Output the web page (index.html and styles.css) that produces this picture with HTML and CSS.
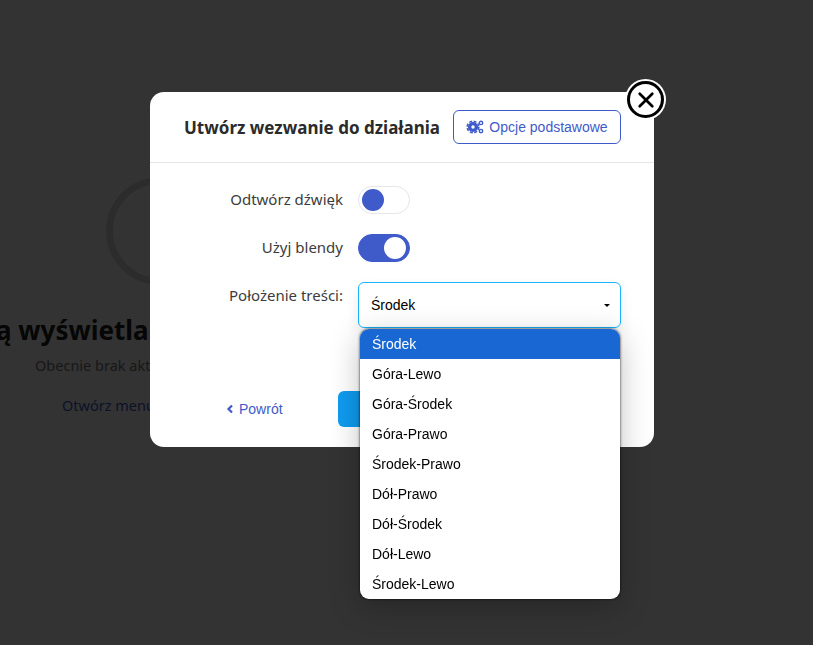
FILE: index.html
```html
<!DOCTYPE html>
<html lang="pl">
<head>
<meta charset="utf-8">
<title>Utwórz wezwanie do działania</title>
<link rel="stylesheet" href="styles.css">
</head>
<body>
<main class="empty">
  <div class="ring"></div>
  <h2 class="empty-title">ą wyświetlać</h2>
  <p class="empty-text">Obecnie brak aktywnych</p>
  <a class="empty-link">Otwórz menu</a>
</main>
<div class="overlay"></div>
<section class="modal">
  <button class="close" aria-label="Zamknij">
    <svg viewBox="0 0 20 20" width="18" height="18"><path d="M3 3L17 17M17 3L3 17" fill="none" stroke="#000" stroke-width="3" stroke-linecap="round"/></svg>
  </button>
  <header class="modal-header">
    <h1 class="modal-title">Utwórz wezwanie do działania</h1>
    <button class="outline-btn">
      <svg class="gears" viewBox="0 0 18 14" width="18" height="14">
        <circle cx="7" cy="7" r="3.4" fill="none" stroke="#3f5bc9" stroke-width="3.4"/>
        <circle cx="7" cy="7" r="5.8" fill="none" stroke="#3f5bc9" stroke-width="1.6" stroke-dasharray="3 1.55"/>
        <circle cx="15" cy="2.9" r="1.7" fill="none" stroke="#3f5bc9" stroke-width="1.4"/>
        <circle cx="15" cy="11.1" r="1.7" fill="none" stroke="#3f5bc9" stroke-width="1.4"/>
      </svg>
      Opcje podstawowe
    </button>
  </header>
  <div class="modal-body">
    <div class="form">
      <span class="label">Odtwórz dźwięk</span>
      <span class="switch"><span class="knob"></span></span>
      <span class="label">Użyj blendy</span>
      <span class="switch on"><span class="knob"></span></span>
      <span class="label label-top">Położenie treści:</span>
      <div class="select-wrap">
        <div class="select">Środek<span class="caret"></span></div>
        <ul class="menu">
          <li class="active">Środek</li>
          <li>Góra-Lewo</li>
          <li>Góra-Środek</li>
          <li>Góra-Prawo</li>
          <li>Środek-Prawo</li>
          <li>Dół-Prawo</li>
          <li>Dół-Środek</li>
          <li>Dół-Lewo</li>
          <li>Środek-Lewo</li>
        </ul>
      </div>
    </div>
    <footer class="modal-footer">
      <a class="back">
        <svg viewBox="0 0 8 10" width="8" height="10"><path d="M6 1.5L2.5 5L6 8.5" fill="none" stroke="#3f5bc9" stroke-width="2.2"/></svg>
        Powrót
      </a>
      <button class="primary"></button>
    </footer>
  </div>
</section>
</body>
</html>
```
FILE: styles.css
```css
* { box-sizing: border-box; }
html, body { height: 100%; }
body {
  margin: 0;
  overflow: hidden;
  background: #fff;
  font-family: "Noto Sans", sans-serif;
}
.empty {
  width: 320px;
  padding-top: 177px;
  display: flex;
  flex-direction: column;
  align-items: flex-start;
  color: #222;
}
.ring {
  width: 108px;
  height: 108px;
  margin-left: 106px;
  border: 7px solid #ddd;
  border-radius: 50%;
}
.empty-title {
  margin: 27px 0 0 -4px;
  font-size: 26px;
  line-height: 36px;
  font-weight: 700;
  white-space: nowrap;
}
.empty-text {
  margin: 6px 0 0 35px;
  font-size: 14.5px;
  line-height: 22px;
  color: #777;
  white-space: nowrap;
}
.empty-link {
  margin: 18px 0 0 62px;
  font-size: 14.5px;
  line-height: 22px;
  color: #3f5bc9;
  white-space: nowrap;
}
.overlay {
  position: fixed;
  inset: 0;
  background: rgba(0, 0, 0, 0.8);
}
.modal {
  position: absolute;
  left: 150px;
  top: 92px;
  width: 504px;
  height: 355px;
  background: #fff;
  border-radius: 14px;
}
.close {
  position: absolute;
  right: -10px;
  top: -11px;
  width: 37px;
  height: 37px;
  padding: 0;
  display: flex;
  align-items: center;
  justify-content: center;
  background: #fff;
  border: 3px solid #000;
  border-radius: 50%;
  box-shadow: 0 0 0 2px #fff;
}
.modal-header {
  height: 71px;
  padding: 0 33px 1px 34px;
  display: flex;
  align-items: center;
  justify-content: space-between;
  border-bottom: 1px solid #e5e5e5;
}
.modal-title {
  margin: 1px 0 0 0;
  font-size: 17px;
  font-weight: 700;
  color: #2b2b2b;
  white-space: nowrap;
}
.outline-btn {
  width: 168px;
  height: 34px;
  padding: 0;
  display: flex;
  align-items: center;
  justify-content: center;
  gap: 5px;
  background: #fff;
  border: 1px solid #3f5bc9;
  border-radius: 6px;
  color: #3f5bc9;
  font-family: "Liberation Sans", sans-serif;
  font-size: 14px;
}
.modal-body {
  padding: 23px 33px 0 0;
}
.form {
  display: grid;
  grid-template-columns: 193px 263px;
  column-gap: 15px;
  row-gap: 20px;
  justify-content: start;
  align-items: center;
}
.label {
  justify-self: end;
  padding-bottom: 2px;
  font-size: 15px;
  color: #3c3c3c;
  white-space: nowrap;
}
.label-top {
  align-self: start;
  padding: 0 0 0 1px;
  line-height: 26px;
}
.switch {
  display: flex;
  align-items: center;
  width: 52px;
  height: 28px;
  padding: 0 3px;
  background: #fff;
  border: 1px solid #e6e6e6;
  border-radius: 14px;
}
.switch.on {
  justify-content: flex-end;
  background: #3f5bc9;
  border-color: #3f5bc9;
}
.knob {
  width: 22px;
  height: 22px;
  border-radius: 50%;
  background: #3f5bc9;
}
.switch.on .knob { background: #fff; }
.select-wrap { position: relative; }
.select {
  height: 46px;
  padding: 0 10px 0 12px;
  display: flex;
  align-items: center;
  justify-content: space-between;
  background: #fff;
  border: 1px solid #19b5fe;
  border-radius: 6px;
  font-family: "Liberation Sans", sans-serif;
  font-size: 14px;
  color: #000;
  box-shadow: 0 6px 14px rgba(0, 0, 0, 0.08);
}
.caret {
  width: 0;
  height: 0;
  border: 3px solid transparent;
  border-top: 3.5px solid #000;
  border-bottom: 0;
}
.menu {
  position: absolute;
  z-index: 2;
  left: 2px;
  top: 47px;
  width: 260px;
  margin: 0;
  padding: 0;
  list-style: none;
  background: #fff;
  border-radius: 9px;
  overflow: hidden;
  font-family: "Liberation Sans", sans-serif;
  font-size: 14px;
  color: #000;
  box-shadow: 0 0 2px 1px rgba(0, 0, 0, 0.4), 0 8px 30px rgba(0, 0, 0, 0.25);
}
.menu li {
  height: 30px;
  padding-left: 12px;
  line-height: 30px;
}
.menu .active {
  background: #1967d2;
  color: #fff;
}
.modal-footer {
  margin-top: 63px;
  display: flex;
  align-items: center;
  justify-content: space-between;
  padding-left: 76px;
}
.back {
  display: flex;
  align-items: center;
  gap: 5px;
  font-family: "Liberation Sans", sans-serif;
  font-size: 14px;
  color: #3f5bc9;
}
.primary {
  width: 280px;
  height: 36px;
  margin-right: 3px;
  padding: 0;
  border: 0;
  border-radius: 6px;
  background: linear-gradient(90deg, #0f9cf0, #0a7fd0);
}
```
